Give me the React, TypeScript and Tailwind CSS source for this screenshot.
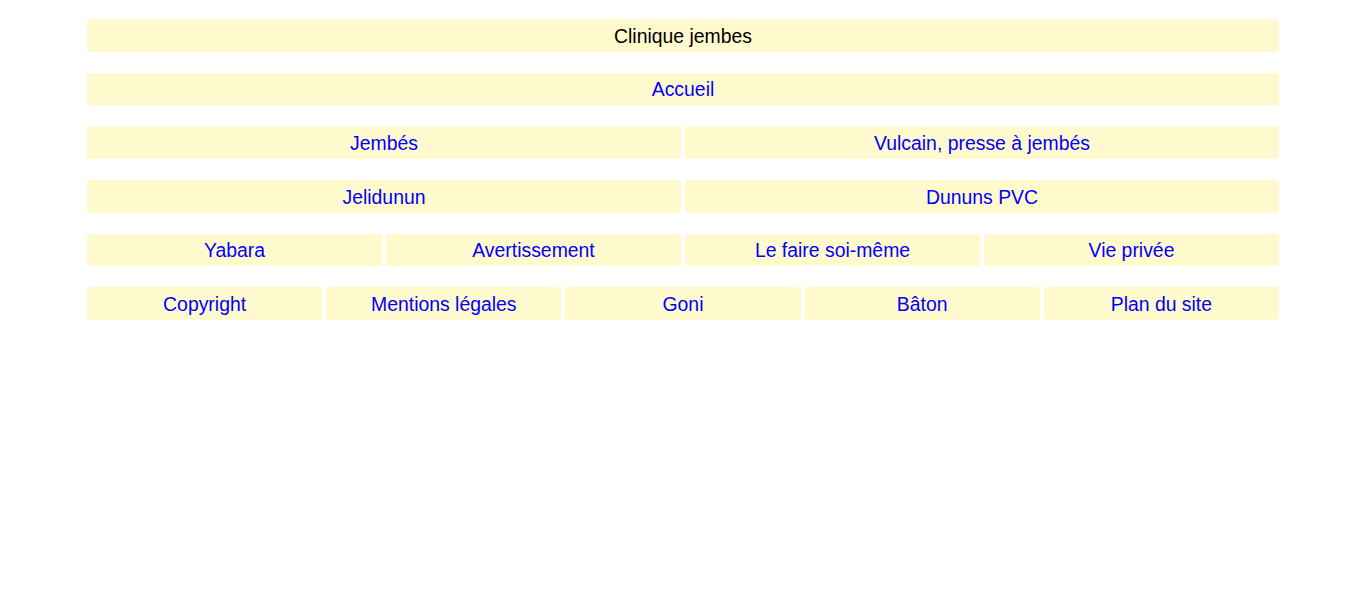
const rows: { label: string; href?: boolean }[][] = [
  [{ label: 'Accueil', href: true }],
  [
    { label: 'Jembés', href: true },
    { label: 'Vulcain, presse à jembés', href: true },
  ],
  [
    { label: 'Jelidunun', href: true },
    { label: 'Dununs PVC', href: true },
  ],
  [
    { label: 'Yabara', href: true },
    { label: 'Avertissement', href: true },
    { label: 'Le faire soi-même', href: true },
    { label: 'Vie privée', href: true },
  ],
  [
    { label: 'Copyright', href: true },
    { label: 'Mentions légales', href: true },
    { label: 'Goni', href: true },
    { label: 'Bâton', href: true },
    { label: 'Plan du site', href: true },
  ],
];

const cols: Record<number, string> = {
  1: 'grid-cols-1',
  2: 'grid-cols-2',
  4: 'grid-cols-4',
  5: 'grid-cols-5',
};

const Cell = ({ label, link }: { label: string; link?: boolean }) => (
  <div className="h-[32.6px] pt-[2px] flex items-center justify-center rounded-[3px] bg-[#fffacd]">
    {link ? (
      <a href="#" className="text-[#0000ff]">
        {label}
      </a>
    ) : (
      <span className="text-black">{label}</span>
    )}
  </div>
);

const App = () => {
  return (
    <div className="min-h-screen bg-white font-['Liberation_Sans',Arial,sans-serif] text-[19.4px]">
      <div className="w-[1192px] mx-auto pt-[19px] flex flex-col gap-[21.1px]">
        <Cell label="Clinique jembes" />
        {rows.map((row, i) => (
          <div key={i} className={`grid gap-1 ${cols[row.length]}`}>
            {row.map((c) => (
              <Cell key={c.label} label={c.label} link={c.href} />
            ))}
          </div>
        ))}
      </div>
    </div>
  );
};

export default App;
